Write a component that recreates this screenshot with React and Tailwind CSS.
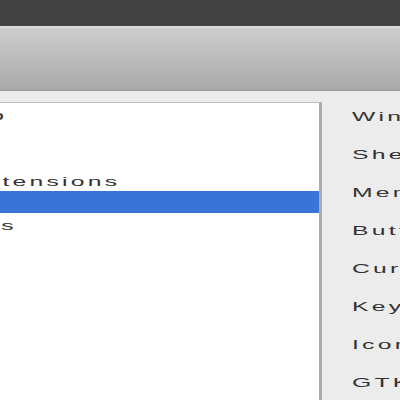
import React from "react";

const sections = [
  { name: "Desktop", shift: "ml-[-106px]" },
  { name: "Fonts", shift: "ml-[-106px]" },
  { name: "Shell", shift: "ml-[-106px]" },
  { name: "Shell Extensions", shift: "ml-[-114px]" },
  { name: "Theme", shift: "ml-[-106px]", selected: true },
  { name: "Windows", shift: "ml-[-106px]" },
];

const settings = [
  "Window theme",
  "Shell theme",
  "Menus have icons",
  "Buttons have icons",
  "Cursor theme",
  "Keybinding theme",
  "Icon theme",
  "GTK+ theme",
];

// the capture is stretched sideways, so labels are widened the same way
const Label = ({ children, className = "" }) => (
  <span
    className={
      "block whitespace-nowrap origin-left [transform:scaleX(1.9)] pt-[3px] text-[13px] tracking-[1.7px] font-['Liberation_Sans',Arial,sans-serif] " +
      className
    }
  >
    {children}
  </span>
);

export default function App() {
  return (
    <div className="w-[400px] h-[400px] overflow-hidden flex flex-col bg-[#ececec]">
      {/* desktop backdrop */}
      <div className="h-[26px] shrink-0 bg-[#434343]" />

      {/* header bar */}
      <div className="h-[65px] shrink-0 border-t-2 border-t-[#dadada] border-b border-b-[#989898] bg-gradient-to-b from-[#cecece] to-[#a9a9a9]" />

      <div className="flex-1 flex min-h-0">
        {/* section list */}
        <div className="w-[322px] shrink-0 pt-[11px] flex flex-col">
          <div className="flex-1 bg-white border-t border-t-[#bdbdbd] border-r-[3px] border-r-[#acacac] overflow-hidden">
            {sections.map((s) => (
              <div
                key={s.name}
                className={
                  "h-[22px] flex items-center " +
                  (s.selected ? "bg-[#3875d7] text-white" : "text-[#333333]")
                }
              >
                <Label className={s.shift}>{s.name}</Label>
              </div>
            ))}
          </div>
        </div>

        {/* settings column */}
        <div className="flex-1 min-w-0 overflow-hidden pt-[5px] pl-[30px]">
          {settings.map((s) => (
            <div key={s} className="h-[38px] flex items-center text-[#333333]">
              <Label>{s}</Label>
            </div>
          ))}
        </div>
      </div>
    </div>
  );
}
